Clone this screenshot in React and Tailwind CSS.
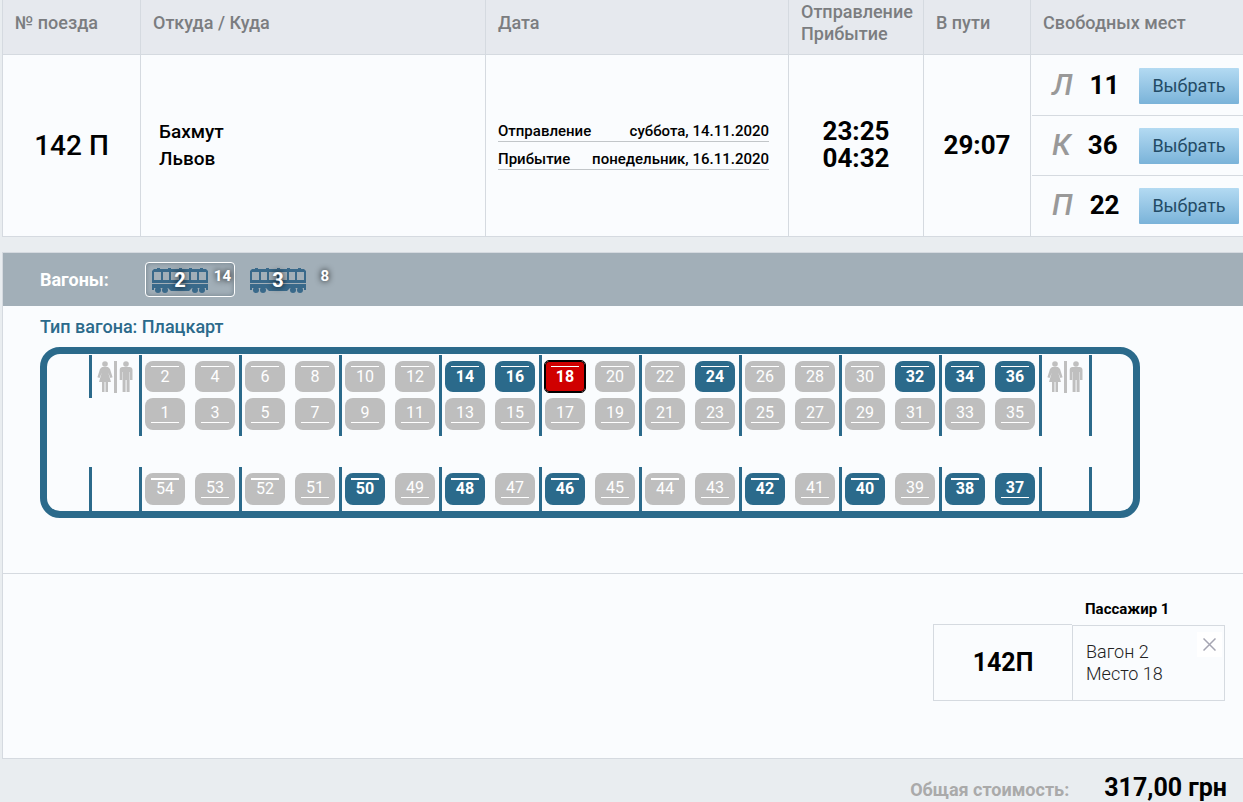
import { useState } from "react";
import clsx from "clsx";

// =====================================
// DATA
// =====================================

const places = [
  { type: "Л", free: 11 },
  { type: "К", free: 36 },
  { type: "П", free: 22 },
];

const wagons = [
  { number: 2, free: 14 },
  { number: 3, free: 8 },
];

const freeSeats = [14, 16, 18, 24, 32, 34, 36, 37, 38, 40, 42, 46, 48, 50];

const bays = [0, 1, 2, 3, 4, 5, 6, 7, 8];

// =====================================
// ICONS
// =====================================

function WagonIcon() {
  return (
    <svg width="56" height="26" viewBox="0 0 56 26" fill="#39698a" aria-hidden="true">
      <path d="M5 0h3v2H5zM16 0h3v2h-3zM27 0h3v2h-3zM37 0h3v2h-3zM48 0h3v2h-3z" />
      <path
        fillRule="evenodd"
        d="M2 1h52l2 2v12H0V3zM2 4v8h7V4zM11 4v8h6V4zM19 4v8h8V4zM29 4v8h8V4zM39 4v8h6V4zM47 4v8h7V4z"
      />
      <path d="M0 16h56v6h-2v-2H40l-3 3H19l-3-3H2v2H0z" />
      <circle cx="6" cy="22" r="3" />
      <circle cx="13" cy="22" r="3" />
      <circle cx="43" cy="22" r="3" />
      <circle cx="50" cy="22" r="3" />
    </svg>
  );
}

function ToiletIcon() {
  return (
    <svg width="36" height="32" viewBox="0 0 36 32" fill="#bfbfbf" aria-hidden="true">
      <circle cx="8" cy="3" r="2.8" />
      <path d="M5 6h6l2 2 2.6 8.2-2.2.8-2.2-5.5 2.8 9.5h-3v10H8.5V21h-1v10H5V21H2l2.8-9.5L2.6 17l-2.2-.8L3 8z" />
      <path d="M17 0h3v32h-3z" />
      <circle cx="29" cy="3" r="2.8" />
      <path d="M25.5 6h7c1.8 0 3 1.2 3 3v10H33v-8h-.4v20h-3V19h-1v12h-3V11h-.4v8h-2.5V9c0-1.8 1-3 2.8-3z" />
    </svg>
  );
}

// =====================================
// SEATS
// =====================================

function Seat({ number, side, selected, onSelect }) {
  const free = freeSeats.includes(number);
  const upper = number % 2 === 0;

  return (
    <button
      type="button"
      disabled={!free}
      onClick={() => onSelect(number)}
      className={clsx(
        "flex w-10 items-start justify-center text-base text-white",
        !side && upper ? "h-[31px]" : "h-8",
        selected
          ? "rounded-sm border border-black bg-[#d00000] pt-1 font-bold outline outline-black"
          : "rounded-lg pt-[5px]",
        !selected && (free ? "bg-[#2b6a8b] font-bold" : "bg-[#bebebe]")
      )}
    >
      <span
        className={clsx(
          "block w-7 border-white text-center",
          upper && !side && "border-t leading-[19px]",
          upper && side && "border-t-2 leading-[17px]",
          !upper && "border-b leading-[19px]"
        )}
      >
        {number}
      </span>
    </button>
  );
}

function WagonScheme({ selected, onSelect }) {
  const seat = (number, side) => (
    <Seat
      number={number}
      side={side}
      selected={selected === number}
      onSelect={onSelect}
    />
  );

  return (
    <div className="w-[1100px] rounded-[20px] border-[7px] border-[#2b6a8b] pt-px">
      {/* COMPARTMENTS */}
      <div className="flex pl-[42px]">
        <div className="h-[43px] w-[50px] shrink-0 border-l-[3px] border-[#2b6a8b] pt-1.5 pl-[5px]">
          <ToiletIcon />
        </div>

        {bays.map((bay) => (
          <div
            key={bay}
            className="grid w-[100px] shrink-0 grid-cols-[40px_40px] gap-x-2.5 gap-y-1.5 border-l-[3px] border-[#2b6a8b] py-1.5 pl-[3px]"
          >
            {seat(bay * 4 + 2)}
            {seat(bay * 4 + 4)}
            {seat(bay * 4 + 1)}
            {seat(bay * 4 + 3)}
          </div>
        ))}

        <div className="w-[50px] shrink-0 border-l-[3px] border-[#2b6a8b] pt-1.5 pl-[5px]">
          <ToiletIcon />
        </div>
        <div className="grow border-l-[3px] border-[#2b6a8b]" />
      </div>

      {/* SIDE SEATS */}
      <div className="mt-[31px] flex pl-[42px]">
        <div className="w-[50px] shrink-0 border-l-[3px] border-[#2b6a8b]" />

        {bays.map((bay) => (
          <div
            key={bay}
            className="flex w-[100px] shrink-0 gap-2.5 border-l-[3px] border-[#2b6a8b] py-1.5 pl-[3px]"
          >
            {seat(54 - bay * 2, true)}
            {seat(53 - bay * 2, true)}
          </div>
        ))}

        <div className="w-[50px] shrink-0 border-l-[3px] border-[#2b6a8b]" />
        <div className="grow border-l-[3px] border-[#2b6a8b]" />
      </div>
    </div>
  );
}

// =====================================
// TRAIN TABLE
// =====================================

function TrainTable() {
  const th = "border-b border-l border-[#d5dae0] px-3 pt-0 pb-2 text-left font-medium";
  const td = "border-b border-l border-[#d5dae0] p-0";

  return (
    <table className="w-full table-fixed border-separate border-spacing-0">
      <thead className="bg-[#e6e9ee] text-lg leading-[22px] text-[#7b7d80]">
        <tr className="h-[55px]">
          <th className={clsx(th, "w-[138px]")}>№ поезда</th>
          <th className={th}>Откуда / Куда</th>
          <th className={clsx(th, "w-[303px]")}>Дата</th>
          <th className={clsx(th, "w-[135px]")}>
            Отправление
            <br />
            Прибытие
          </th>
          <th className={clsx(th, "w-[107px]")}>В пути</th>
          <th className={clsx(th, "w-[213px]")}>Свободных мест</th>
        </tr>
      </thead>

      <tbody className="bg-[#fafcfe] font-medium text-black">
        <tr>
          <td className={clsx(td, "text-center text-[28px]")}>142 П</td>

          <td className={clsx(td, "text-[19px] leading-[27px]")}>
            <div className="pb-0.5 pl-[18px]">
              Бахмут
              <br />
              Львов
            </div>
          </td>

          <td className={td}>
            <div className="pr-[19px] pb-2 pl-3 text-[15px] leading-[18px]">
              <div className="flex justify-between border-b border-[#c2c6c9] pt-2 pb-px">
                <span>Отправление</span>
                <span>суббота, 14.11.2020</span>
              </div>
              <div className="flex justify-between border-b border-[#c2c6c9] pt-2 pb-px">
                <span>Прибытие</span>
                <span>понедельник, 16.11.2020</span>
              </div>
            </div>
          </td>

          <td className={clsx(td, "text-center text-[26px] leading-[27px] font-bold")}>
            <div className="pb-0.5">
              23:25
              <br />
              04:32
            </div>
          </td>

          <td className={clsx(td, "text-center text-[26px] leading-[27px] font-bold")}>
            29:07
          </td>

          <td className={td}>
            <div className="divide-y divide-[#d5dae0] pt-px pl-px">
              {places.map((place) => (
                <div
                  key={place.type}
                  className="flex h-[60px] items-start pt-3 pr-1 pl-5"
                >
                  <span className="mr-[17px] text-[30px] leading-[34px] text-[#999] italic">
                    {place.type}
                  </span>
                  <span className="text-[26px] leading-[34px] font-bold">{place.free}</span>
                  <button
                    type="button"
                    className="ml-auto h-9 w-[100px] rounded-[1px] bg-linear-to-b from-[#b3daf2] to-[#7ab3d9] text-lg font-normal text-[#234b65]"
                  >
                    Выбрать
                  </button>
                </div>
              ))}
            </div>
          </td>
        </tr>
      </tbody>
    </table>
  );
}

// =====================================
// APP
// =====================================

function App() {
  const [wagon, setWagon] = useState(2);
  const [selected, setSelected] = useState(18);

  return (
    <div className="min-h-screen overflow-hidden bg-[#e9edf0] pl-0.5 font-['Roboto',sans-serif]">
      <TrainTable />

      <div className="mt-[15px] border-y border-l border-[#d5dae0] bg-[#fafcfe]">
        {/* WAGONS */}
        <div className="flex items-center bg-[#a2afb8] px-[37px] py-[9px]">
          <span className="w-[105px] text-lg font-bold text-white">Вагоны:</span>

          {wagons.map((item) => (
            <button
              key={item.number}
              type="button"
              onClick={() => setWagon(item.number)}
              className={clsx(
                "mr-2 flex h-[35px] w-[90px] items-start rounded-sm border pt-[5px] pr-[3px] pl-1.5 font-bold text-white",
                wagon === item.number
                  ? "border-white shadow-[inset_0_0_5px_#6f7f8a]"
                  : "border-transparent"
              )}
            >
              <span className="relative">
                <WagonIcon />
                <span className="absolute inset-0 text-center text-xl leading-6 text-shadow-[0_0_6px_#000]">
                  {item.number}
                </span>
              </span>
              <span className="grow text-right text-[15px] leading-4 text-shadow-[0_0_6px_#000]">
                {item.free}
              </span>
            </button>
          ))}
        </div>

        {/* SCHEME */}
        <div className="border-b border-[#d5dae0] px-[37px] pt-[9px] pb-[55px]">
          <h2 className="mb-2 text-lg leading-6 font-medium text-[#2b6a8b]">
            Тип вагона: Плацкарт
          </h2>
          <WagonScheme selected={selected} onSelect={setSelected} />
        </div>

        {/* TICKET */}
        <div className="flex h-[184px] items-start justify-end pt-[25px] pr-[18px]">
          <div className="mt-[25px] flex h-[77px] w-[139px] items-center justify-center border border-r-0 border-[#d5dae0] text-[25px] font-bold">
            142П
          </div>
          <div className="w-[153px]">
            <h3 className="mb-[5px] pl-[13px] text-[15px] leading-[21px] font-bold">
              Пассажир 1
            </h3>
            <div className="flex h-[76px] justify-between border border-[#d5dae0] pt-1.5 pr-0.5 pl-[13px]">
              <p className="pt-[9px] text-lg leading-[22px] font-light text-[#222]">
                Вагон {wagon}
                <br />
                Место {selected}
              </p>
              <button
                type="button"
                aria-label="Удалить место"
                className="flex size-[25px] items-center justify-center bg-white"
              >
                <svg width="13" height="13" viewBox="0 0 13 13" stroke="#a5a5b2" strokeWidth="1.5">
                  <path d="M.5.5l12 12M12.5.5l-12 12" />
                </svg>
              </button>
            </div>
          </div>
        </div>
      </div>

      {/* TOTAL */}
      <div className="flex h-[43px] items-baseline justify-end gap-[35px] pt-3.5 pr-4">
        <span className="text-lg font-bold text-[#aaa]">Общая стоимость:</span>
        <span className="text-[25px] leading-[30px] font-bold">317,00 грн</span>
      </div>
    </div>
  );
}

export default App;
